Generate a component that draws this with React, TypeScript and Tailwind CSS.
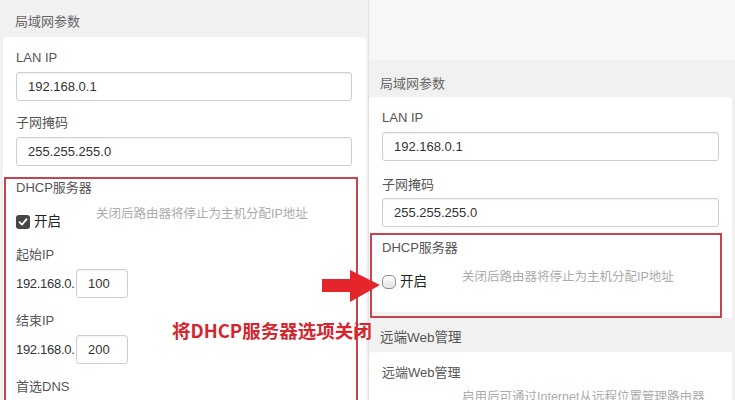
const font = "font-['Liberation_Sans','Noto_Sans_CJK_SC',sans-serif]";

function Field({ value, className = "" }: { value: string; className?: string }) {
  return (
    <div
      className={`h-[29px] flex items-center px-[11px] bg-white border border-[#cfcfcf] rounded-[3px] shadow-[inset_0_1px_2px_rgba(0,0,0,0.06)] text-[13px] text-[#333] ${className}`}
    >
      {value}
    </div>
  );
}

function Label({ children, className = "" }: { children: React.ReactNode; className?: string }) {
  return <div className={`h-[18px] leading-[18px] text-[13px] text-[#555] ${className}`}>{children}</div>;
}

function Check({ on }: { on: boolean }) {
  if (on) {
    return (
      <div className="w-[14px] h-[14px] rounded-[3px] bg-[#454545] flex items-center justify-center">
        <svg width="10" height="10" viewBox="0 0 10 10">
          <path d="M1.5 5.2 L4 7.6 L8.6 2.2" fill="none" stroke="#fff" strokeWidth="1.8" strokeLinecap="round" strokeLinejoin="round" />
        </svg>
      </div>
    );
  }
  return <div className="w-[14px] h-[14px] rounded-[5px] border border-[#8f8f8f] bg-gradient-to-b from-white to-[#e2e2e2]" />;
}

function SwitchRow({ on, hint, hintTop }: { on: boolean; hint: string; hintTop: string }) {
  return (
    <div className="flex items-start">
      <div className={`w-[80px] flex items-center gap-[4px] ${hintTop}`}>
        <Check on={on} />
        <span className="h-[18px] leading-[18px] text-[13.5px] text-[#222]">开启</span>
      </div>
      <div className="h-[18px] leading-[18px] text-[12.5px] text-[#ababab]">{hint}</div>
    </div>
  );
}

function IpRow({ last }: { last: string }) {
  return (
    <div className="flex items-center gap-[2px] mt-[5px]">
      <span className="w-[58px] text-[13px] text-[#333] tracking-[-0.3px]">192.168.0.</span>
      <Field value={last} className="w-[52px] h-[28px] px-[6px]" />
    </div>
  );
}

export default function App() {
  return (
    <div className={`relative w-[735px] h-[400px] overflow-hidden flex bg-[#f1f1f1] ${font}`}>
      {/* left screenshot */}
      <div className="w-[369px] shrink-0 border-r border-[#e2e2e2] pt-[13px]">
        <div className="pl-[15px] h-[18px] leading-[18px] text-[13px] text-[#666]">局域网参数</div>
        <div className="ml-[3px] mt-[6px] w-[363px] bg-white rounded-t-[4px] pt-[12px]">
          <div className="pl-[13px] pr-[14px]">
            <Label>LAN IP</Label>
            <Field value="192.168.0.1" className="mt-[5px]" />
            <Label className="mt-[13px]">子网掩码</Label>
            <Field value="255.255.255.0" className="mt-[5px]" />
          </div>
          <div className="ml-[1px] mt-[11px] w-[354px] h-[240px] border-2 border-b-0 border-[#c8434c] pl-[10px] pr-[8px]">
            <Label>DHCP服务器</Label>
            <div className="mt-[8px]">
              <SwitchRow on hint="关闭后路由器将停止为主机分配IP地址" hintTop="pt-[8px]" />
            </div>
            <Label className="mt-[15px]">起始IP</Label>
            <IpRow last="100" />
            <Label className="mt-[14px]">结束IP</Label>
            <IpRow last="200" />
            <Label className="mt-[14px]">首选DNS</Label>
            <div className="mt-[4px] h-[20px] bg-[#f4f4f4] border border-[#cfcfcf] rounded-[3px]" />
          </div>
        </div>
      </div>

      {/* right screenshot */}
      <div className="flex-1">
        <div className="h-[60px] bg-[#f6f7f6]" />
        <div className="pl-[11px] pt-[15px] h-[33px] leading-[18px] text-[13px] text-[#666]">局域网参数</div>
        <div className="mt-[4px] w-[363px] bg-white rounded-t-[4px] pt-[12px]">
          <div className="pl-[13px] pr-[13px]">
            <Label>LAN IP</Label>
            <Field value="192.168.0.1" className="mt-[5px]" />
            <Label className="mt-[15px]">子网掩码</Label>
            <Field value="255.255.255.0" className="mt-[4px]" />
          </div>
          <div className="ml-[1px] mt-[6px] w-[352px] border-2 border-[#c8434c]">
            <div className="pl-[10px] pt-[4px] pb-[21px]">
              <Label>DHCP服务器</Label>
              <div className="mt-[11px]">
                <SwitchRow on={false} hint="关闭后路由器将停止为主机分配IP地址" hintTop="pt-[5px]" />
              </div>
            </div>
            <div className="h-[4px] bg-[#f1f1f1]" />
          </div>
        </div>
        <div className="pl-[11px] pt-[11px] h-[29px] leading-[18px] text-[13.5px] text-[#555]">远端Web管理</div>
        <div className="mt-[5px] w-[363px] h-[60px] bg-white rounded-t-[4px] pt-[12px] pl-[13px]">
          <Label>远端Web管理</Label>
          <div className="mt-[6px] pl-[80px] h-[18px] leading-[18px] text-[12.5px] text-[#ababab]">
            启用后可通过Internet从远程位置管理路由器
          </div>
        </div>
      </div>

      {/* annotation */}
      <div className="absolute left-[172px] top-[318px] h-[24px] leading-[24px] text-[18.5px] font-bold text-[#d4262e] font-['Noto_Sans_CJK_SC',sans-serif]">
        将DHCP服务器选项关闭
      </div>
      <svg className="absolute left-[320px] top-[266px]" width="62" height="40" viewBox="0 0 62 40">
        <polygon points="2,13 30,13 30,4 60,19 30,36 30,26 2,26" fill="#e4252c" />
      </svg>
    </div>
  );
}
